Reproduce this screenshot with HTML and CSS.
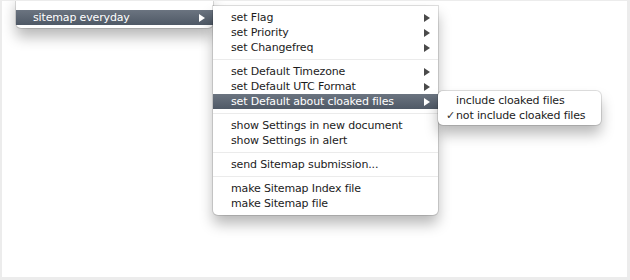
FILE: index.html
```html
<!DOCTYPE html>
<html>
<head>
<meta charset="utf-8">
<link rel="stylesheet" href="styles.css">
</head>
<body>
<div class="frame">
  <div class="menu menu-root">
    <div class="item"><span class="label">&nbsp;</span></div>
    <div class="item active"><span class="label">sitemap everyday</span><span class="arrow"></span></div>
  </div>

  <div class="menu menu-sub">
    <div class="item"><span class="label">set Flag</span><span class="arrow"></span></div>
    <div class="item"><span class="label">set Priority</span><span class="arrow"></span></div>
    <div class="item"><span class="label">set Changefreq</span><span class="arrow"></span></div>
    <div class="sep"></div>
    <div class="item"><span class="label">set Default Timezone</span><span class="arrow"></span></div>
    <div class="item"><span class="label">set Default UTC Format</span><span class="arrow"></span></div>
    <div class="item active"><span class="label">set Default about cloaked files</span><span class="arrow"></span></div>
    <div class="sep"></div>
    <div class="item"><span class="label">show Settings in new document</span></div>
    <div class="item"><span class="label">show Settings in alert</span></div>
    <div class="sep"></div>
    <div class="item"><span class="label">send Sitemap submission...</span></div>
    <div class="sep"></div>
    <div class="item"><span class="label">make Sitemap Index file</span></div>
    <div class="item"><span class="label">make Sitemap file</span></div>
  </div>

  <div class="menu menu-opts">
    <div class="item"><span class="check"></span><span class="label">include cloaked files</span></div>
    <div class="item"><span class="check">✓</span><span class="label">not include cloaked files</span></div>
  </div>
</div>
</body>
</html>
```

FILE: styles.css
```css
html, body {
  margin: 0;
  padding: 0;
  background: #ffffff;
}

.frame {
  position: relative;
  width: 630px;
  height: 280px;
  box-sizing: border-box;
  border-style: solid;
  border-color: #ececec;
  border-width: 1px 3px 3px 2px;
  background: #ffffff;
  overflow: hidden;
  font-family: "DejaVu Sans", "Liberation Sans", sans-serif;
  font-size: 11px;
  letter-spacing: -0.15px;
  color: #1c1c1c;
}

.menu {
  position: absolute;
  display: flex;
  flex-direction: column;
  background: #ffffff;
  box-sizing: border-box;
  border-radius: 0 0 5px 5px;
  box-shadow: 0 0 0 1px rgba(0, 0, 0, 0.12), 0 9px 14px rgba(0, 0, 0, 0.28);
}

.menu-root {
  left: 14px;
  top: -6px;
  width: 197px;
  padding: 0 0 3px 0;
  z-index: 1;
}

.menu-sub {
  left: 211px;
  top: 5px;
  width: 225px;
  padding: 4px 0;
  z-index: 2;
}

.menu-opts {
  left: 436px;
  top: 90px;
  width: 163px;
  padding: 2px 0;
  border-radius: 5px;
  z-index: 3;
}

.item {
  display: flex;
  align-items: center;
  height: 15px;
  line-height: 15px;
  padding: 0 8px 0 18px;
  white-space: nowrap;
}

.menu-root .item {
  padding-left: 17px;
}

.menu-opts .item {
  padding-left: 8px;
}

.label {
  flex: 1;
}

.arrow {
  width: 0;
  height: 0;
  border-top: 4px solid transparent;
  border-bottom: 4px solid transparent;
  border-left: 6px solid #4a4a4a;
}

.item.active {
  background: linear-gradient(#6b7480, #4f5966);
  color: #ffffff;
}

.item.active .arrow {
  border-left-color: #ffffff;
}

.check {
  width: 10px;
  font-size: 11px;
  color: #333;
}

.sep {
  height: 1px;
  margin: 4px 0;
  background: #ebebeb;
}
```
